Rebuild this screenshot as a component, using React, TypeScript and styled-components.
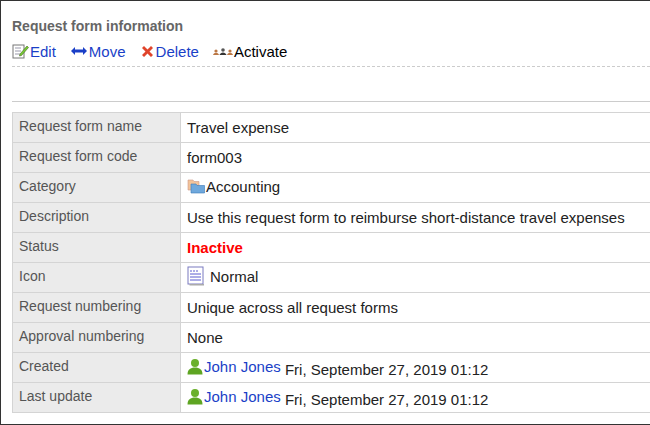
import styled, { createGlobalStyle } from 'styled-components';

const Global = createGlobalStyle`
  html, body { margin: 0; padding: 0; background: #fff; }
  body { font-family: Arial, "Liberation Sans", sans-serif; }
`;

const Frame = styled.div`
  width: 650px;
  height: 425px;
  box-sizing: border-box;
  border: 1px solid #333;
  border-right: none;
  overflow: hidden;
  background: #fff;
  padding: 0 0 0 11px;
`;

const Title = styled.div`
  font-size: 14px;
  font-weight: bold;
  color: #666;
  padding-top: 17px;
  height: 24px;
`;

const Toolbar = styled.div`
  display: flex;
  align-items: center;
  gap: 14px;
  font-size: 15px;
  height: 18px;
  padding-bottom: 6px;
  border-bottom: 1px dashed #ccc;
`;

const Action = styled.span<{ $plain?: boolean }>`
  display: inline-flex;
  align-items: center;
  color: ${({ $plain }) => ($plain ? '#000' : '#1a3fc7')};
  gap: 1px;
`;

const Rule = styled.div`
  margin-top: 34px;
  border-top: 1px solid #ccc;
  margin-bottom: 10px;
`;

const Table = styled.table`
  border-collapse: collapse;
  width: 660px;
  font-size: 15px;
`;

const Label = styled.td`
  width: 168px;
  background: #ebebeb;
  color: #555;
  font-size: 14px;
  border: 1px solid #d4d4d4;
  padding: 5px 6px 0;
  height: 30px;
  vertical-align: top;
  box-sizing: border-box;
`;

const Value = styled.td<{ $red?: boolean }>`
  border: 1px solid #d4d4d4;
  padding: 0 6px;
  color: ${({ $red }) => ($red ? '#f00' : '#222')};
  font-weight: ${({ $red }) => ($red ? 'bold' : 'normal')};
  vertical-align: middle;
`;

const Inline = styled.span<{ $gap?: number }>`
  display: inline-flex;
  align-items: center;
  gap: ${({ $gap }) => $gap ?? 1}px;
`;

const UserLink = styled.span`
  color: #1a3fc7;
`;

const EditIcon = () => (
  <svg width="17" height="16" viewBox="0 0 17 16">
    <rect x="1" y="2" width="11" height="13" fill="#fff" stroke="#777" />
    <path d="M3 5h6M3 8h6M3 11h5" stroke="#99a" />
    <path d="M8 11l7-8 1.5 1.5-7 8-2 .5z" fill="#7c3" stroke="#462" strokeWidth="0.6" />
  </svg>
);
const MoveIcon = () => (
  <svg width="18" height="12" viewBox="0 0 18 12">
    <path d="M1 6l4-4v2.5h8V2l4 4-4 4V7.5H5V10z" fill="#1a3fc7" />
  </svg>
);
const DeleteIcon = () => (
  <svg width="15" height="15" viewBox="0 0 15 15">
    <path d="M2 4l2-2 3.5 3.5L11 2l2 2-3.5 3.5L13 11l-2 2-3.5-3.5L4 13l-2-2 3.5-3.5z" fill="#e0442b" />
  </svg>
);
const ActivateIcon = () => (
  <svg width="20" height="10" viewBox="0 0 20 10">
    <circle cx="3" cy="5" r="1.6" fill="#b74" />
    <path d="M0 9c1-3 5-3 6 0z" fill="#b74" />
    <circle cx="10" cy="4" r="1.8" fill="#555" />
    <path d="M6.5 9c1-3.5 6-3.5 7 0z" fill="#333" />
    <circle cx="17" cy="5" r="1.6" fill="#b74" />
    <path d="M14 9c1-3 5-3 6 0z" fill="#b74" />
  </svg>
);
const FolderIcon = () => (
  <svg width="18" height="16" viewBox="0 0 18 16">
    <path d="M1 2h5l1 1.5h5V12H1z" fill="#f3c49a" stroke="#c98" strokeWidth="0.6" />
    <path d="M4 6h5l1 1.5h7.5V15H4z" fill="#6fa8dc" stroke="#3a78b8" strokeWidth="0.6" />
  </svg>
);
const FormIcon = () => (
  <svg width="18" height="20" viewBox="0 0 18 20">
    <rect x="1" y="1" width="15" height="17" fill="#fff" stroke="#7a7ac0" />
    <rect x="2.5" y="18" width="14.5" height="1.5" fill="#aaa" />
    <path d="M3 5h2M6 5h2M9 5h2M3 8h11M3 11h11M3 14h11" stroke="#5a5ad0" />
  </svg>
);
const UserIcon = () => (
  <svg width="16" height="17" viewBox="0 0 16 17">
    <circle cx="8" cy="5" r="4" fill="#6ab02a" />
    <path d="M0.5 16.5c0-5 3-7 7.5-7s7.5 2 7.5 7z" fill="#5ea522" />
  </svg>
);

const rows: { label: string; value: React.ReactNode; red?: boolean }[] = [
  { label: 'Request form name', value: 'Travel expense' },
  { label: 'Request form code', value: 'form003' },
  { label: 'Category', value: <Inline><FolderIcon />Accounting</Inline> },
  { label: 'Description', value: 'Use this request form to reimburse short-distance travel expenses' },
  { label: 'Status', value: 'Inactive', red: true },
  { label: 'Icon', value: <Inline $gap={5}><FormIcon />Normal</Inline> },
  { label: 'Request numbering', value: 'Unique across all request forms' },
  { label: 'Approval numbering', value: 'None' },
  { label: 'Created', value: <span><Inline><UserIcon /><UserLink>John Jones</UserLink></Inline> Fri, September 27, 2019 01:12</span> },
  { label: 'Last update', value: <span><Inline><UserIcon /><UserLink>John Jones</UserLink></Inline> Fri, September 27, 2019 01:12</span> },
];

export default function App() {
  return (
    <Frame>
      <Global />
      <Title>Request form information</Title>
      <Toolbar>
        <Action><EditIcon />Edit</Action>
        <Action><MoveIcon />Move</Action>
        <Action><DeleteIcon />Delete</Action>
        <Action $plain><ActivateIcon />Activate</Action>
      </Toolbar>
      <Rule />
      <Table>
        <tbody>
          {rows.map((r) => (
            <tr key={r.label}>
              <Label>{r.label}</Label>
              <Value $red={r.red}>{r.value}</Value>
            </tr>
          ))}
        </tbody>
      </Table>
    </Frame>
  );
}
